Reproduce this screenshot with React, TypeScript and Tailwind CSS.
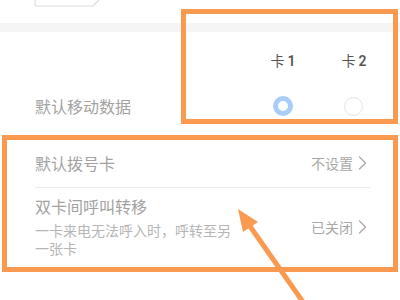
import React from "react";

const font = { fontFamily: '"Noto Sans CJK SC", "Noto Sans", sans-serif' };

function Chevron() {
  return (
    <svg width="9" height="14" viewBox="0 0 9 14" className="ml-[5px]">
      <path d="M1.5 1 L7.5 7 L1.5 13" fill="none" stroke="#ababab" strokeWidth="1.3" strokeLinecap="round" strokeLinejoin="round" />
    </svg>
  );
}

function CardLabel({ n }: { n: string }) {
  return (
    <div className="w-[40px] text-center text-[14px] text-[#555555] leading-[20px]">
      卡 <span className="font-semibold" style={{ fontFamily: 'Roboto, "Noto Sans", sans-serif' }}>{n}</span>
    </div>
  );
}

export default function App() {
  return (
    <div className="relative w-[400px] h-[300px] overflow-hidden bg-white" style={font}>
      {/* top strip with partial box */}
      <div className="h-[23px] pl-[34px]">
        <svg width="70" height="8" viewBox="0 0 70 8">
          <path d="M1 -4 L1 4 Q1 6 3 6 L59 6 L66 -1" fill="none" stroke="#dcdcdc" strokeWidth="1.2" />
        </svg>
      </div>
      <div className="h-[9px] bg-[#f5f5f5]" />

      {/* header row */}
      <div className="h-[56px] flex items-center pr-[26px]">
        <div className="flex-1" />
        <CardLabel n="1" />
        <div className="w-[31px]" />
        <CardLabel n="2" />
      </div>

      {/* default mobile data row */}
      <div className="h-[36px] flex items-center pl-[35px] pr-[26px]">
        <div className="flex-1 text-[16px] text-[#a2a2a2] leading-[20px]">默认移动数据</div>
        <div className="w-[40px] flex justify-center">
          <div className="w-[20px] h-[20px] rounded-full border-[5px] border-[#a9cdf8] bg-white" />
        </div>
        <div className="w-[31px]" />
        <div className="w-[40px] flex justify-center -translate-x-[1px]">
          <div className="w-[19px] h-[19px] rounded-full border border-[#e4e4e4] bg-white" />
        </div>
      </div>

      {/* list */}
      <div className="pt-[15px] pl-[35px] pr-[30px]">
        <div className="h-[48px] flex items-center">
          <div className="flex-1 text-[16px] text-[#a2a2a2] leading-[20px]">默认拨号卡</div>
          <div className="flex items-center pr-[3px] text-[14px] text-[#a8a8a8] leading-[20px]">
            不设置
            <Chevron />
          </div>
        </div>
        <div className="h-px bg-[#ebebeb]" />
        <div className="flex items-center pt-[8px] pb-[10px]">
          <div className="flex-1">
            <div className="text-[16px] text-[#a2a2a2] leading-[20px]">双卡间呼叫转移</div>
            <div className="mt-[5px] w-[200px] text-[14px] text-[#b5b5b5] leading-[18px]">
              一卡来电无法呼入时，呼转至另一张卡
            </div>
          </div>
          <div className="flex items-center pr-[3px] text-[14px] text-[#a8a8a8] leading-[20px]">
            已关闭
            <Chevron />
          </div>
        </div>
      </div>

      {/* annotations */}
      <div className="absolute left-[181px] top-[9px] w-[217px] h-[115px] border-[5px] border-[#fa9a50]" />
      <div className="absolute left-[2px] top-[135px] w-[396px] h-[137px] border-[5px] border-[#fa9a50]" />
      <svg className="absolute left-0 top-0" width="400" height="300" viewBox="0 0 400 300">
        <line x1="310" y1="312" x2="247" y2="222" stroke="#fa9a50" strokeWidth="5" />
        <polygon points="238,209 258,222 243,232" fill="#fa9a50" />
      </svg>
    </div>
  );
}
